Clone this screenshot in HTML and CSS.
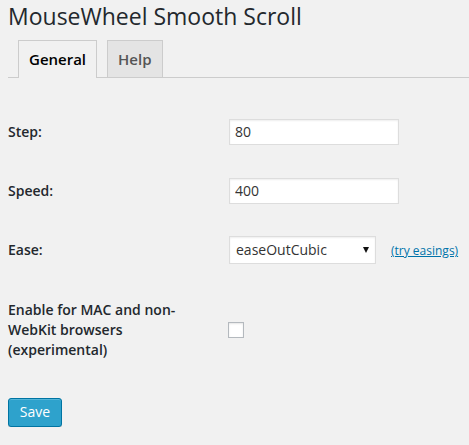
FILE: index.html
```html
<!DOCTYPE html>
<html>
<head>
<meta charset="utf-8">
<link rel="stylesheet" href="styles.css">
</head>
<body>
<div class="wrap">
  <h1 class="title">MouseWheel Smooth Scroll</h1>
  <nav class="tabs">
    <span class="tab tab-active">General</span>
    <span class="tab">Help</span>
  </nav>
  <form class="form">
    <div class="row">
      <label class="label">Step:</label>
      <div class="field"><input class="text-input" type="text" value="80"></div>
    </div>
    <div class="row">
      <label class="label">Speed:</label>
      <div class="field"><input class="text-input" type="text" value="400"></div>
    </div>
    <div class="row">
      <label class="label">Ease:</label>
      <div class="field">
        <span class="select-wrap"><select class="select"><option>easeOutCubic</option></select></span>
        <a class="link" href="#">(try easings)</a>
      </div>
    </div>
    <div class="row row-tall">
      <label class="label label-multi">Enable for MAC and non-WebKit browsers (experimental)</label>
      <div class="field"><span class="checkbox"></span></div>
    </div>
    <div class="submit">
      <button class="button" type="button">Save</button>
    </div>
  </form>
</div>
</body>
</html>
```

FILE: styles.css
```css
html, body {
  margin: 0;
  padding: 0;
  background: #f1f1f1;
}
body {
  font-family: "Open Sans", "Liberation Sans", sans-serif;
  color: #23282d;
  font-size: 14px;
}
.wrap {
  padding-left: 8px;
}
.title {
  margin: 0;
  font-size: 23px;
  line-height: 32px;
  font-weight: 400;
  color: #23282d;
}
.tabs {
  margin-top: 8px;
  border-bottom: 1px solid #ccc;
  padding-left: 10px;
  display: flex;
  gap: 10px;
  height: 37px;
  align-items: flex-end;
}
.tab {
  box-sizing: border-box;
  height: 37px;
  border: 1px solid #ccc;
  border-bottom: none;
  background: #e4e4e4;
  color: #555;
  font-size: 15px;
  font-weight: 600;
  line-height: 24px;
  padding: 6px 10px;
}
.tab-active {
  background: #f1f1f1;
  color: #000;
  height: 38px;
  margin-bottom: -1px;
}
.form {
  margin-top: 25px;
}
.row {
  display: grid;
  grid-template-columns: 220px 1fr;
  height: 59px;
}
.row-tall {
  height: 100px;
}
.label {
  font-weight: 600;
  line-height: 20px;
  padding-top: 19px;
  color: #23282d;
  width: 200px;
}
.label-multi {
  padding-top: 20px;
}
.field {
  display: flex;
  align-items: center;
  padding-bottom: 2px;
}
.row-tall .field {
  padding-bottom: 0;
}
.text-input {
  box-sizing: border-box;
  margin: 0 0 0 1px;
  width: 170px;
  height: 26px;
  border: 1px solid #ddd;
  box-shadow: inset 0 1px 2px rgba(0,0,0,.07);
  background: #fff;
  color: #333;
  font-family: inherit;
  font-size: 14px;
  padding: 0 5px;
  outline: none;
}
.select-wrap {
  position: relative;
  display: inline-block;
  margin-left: 1px;
}
.select {
  box-sizing: border-box;
  -webkit-appearance: none;
  appearance: none;
  width: 147px;
  height: 28px;
  border: 1px solid #ddd;
  box-shadow: inset 0 1px 2px rgba(0,0,0,.07);
  background: #fff;
  color: #333;
  font-family: inherit;
  font-size: 14px;
  padding: 0 6px;
  border-radius: 0;
  outline: none;
}
.select-wrap::after {
  content: "";
  position: absolute;
  left: 134px;
  top: 11px;
  border-left: 3.5px solid transparent;
  border-right: 3.5px solid transparent;
  border-top: 6px solid #111;
}
.link {
  margin-left: 15px;
  color: #0073aa;
  font-size: 12px;
  text-decoration: underline;
  padding-top: 2px;
}
.checkbox {
  box-sizing: border-box;
  display: block;
  width: 16px;
  height: 16px;
  border: 1px solid #b4b9be;
  background: #fff;
  box-shadow: inset 0 1px 2px rgba(0,0,0,.1);
}
.submit {
  padding-top: 18px;
}
.button {
  box-sizing: border-box;
  width: 54px;
  height: 29px;
  padding: 0 0 1px;
  border: 1px solid #0074a2;
  border-radius: 3px;
  background: #2ea2cc;
  color: #fff;
  font-family: inherit;
  font-size: 14px;
  line-height: 26px;
  box-shadow: inset 0 1px 0 rgba(120,200,230,.5), 0 1px 0 rgba(0,0,0,.15);
  cursor: pointer;
}
```
